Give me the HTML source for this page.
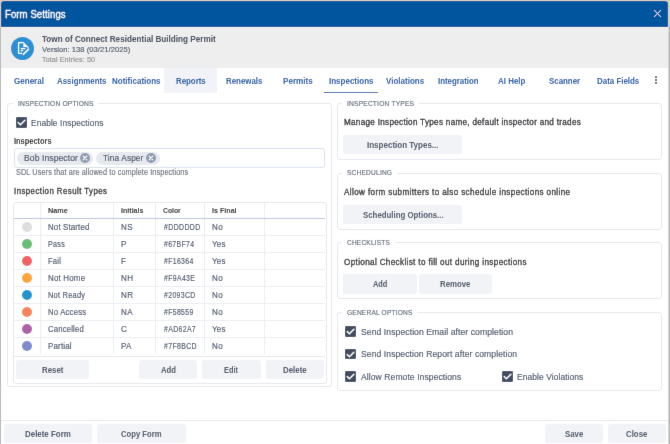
<!DOCTYPE html>
<html><head><meta charset="utf-8"><title>Form Settings</title>
<style>
html,body{margin:0;padding:0;width:670px;height:444px;overflow:hidden;background:#d6cdc3}
body{position:relative;font-family:"Liberation Sans", sans-serif}
</style></head><body><svg width="0" height="0" style="position:absolute"><filter id="sb" x="0" y="0" width="100%" height="100%" filterUnits="userSpaceOnUse" primitiveUnits="userSpaceOnUse"><feConvolveMatrix order="3" kernelMatrix="0 1 0 1 12 1 0 1 0" divisor="16" edgeMode="duplicate" preserveAlpha="false"/></filter></svg>
<div style="position:absolute;left:0;top:0;width:670px;height:444px;filter:url(#sb)">
<div style="position:absolute;left:0px;top:0px;width:670px;height:444px;background:#d6cdc3;"></div>
<div style="position:absolute;left:1px;top:1px;width:667px;height:443px;background:#fff;border-radius:3px 3px 0 0;overflow:hidden"><div style="position:absolute;left:0;top:0;width:667px;height:26px;background:#00559f"></div><div style="position:absolute;left:0;top:26px;width:667px;height:41px;background:#eeeeee"></div></div>
<div style="position:absolute;left:0px;top:27px;width:1px;height:417px;background:#b9b9b9;"></div>
<div style="position:absolute;left:668px;top:27px;width:2px;height:417px;background:linear-gradient(90deg,#e2e2e2,#a8a8a8);"></div>
<svg style="position:absolute;left:653px;top:9px" width="9" height="9" viewBox="0 0 9 9"><path d="M1.4 1.4L7.6 7.6M7.6 1.4L1.4 7.6" stroke="#dfe6f0" stroke-width="0.95" stroke-linecap="round"/></svg>
<div style="position:absolute;left:11.2px;top:36.8px;width:23.2px;height:23.2px;border-radius:50%;background:#2b8fd6"></div>
<svg style="position:absolute;left:11px;top:37px" width="23" height="23" viewBox="0 0 23 23"><path d="M12.6 5.6H8.3Q7.6 5.6 7.6 6.3V15.7Q7.6 16.4 8.3 16.4H11.2" fill="none" stroke="#fff" stroke-width="1.2" stroke-linejoin="round"/><path d="M12.4 5L17.4 10H12.4Z" fill="#fff"/><path d="M16.9 9.8V11.4" stroke="#fff" stroke-width="1.1"/><path d="M9.8 11.6H14.2M9.8 13.6H12" stroke="#fff" stroke-width="1.1"/><path d="M12.4 17.3L17.5 12.3" stroke="#fff" stroke-width="1.6" stroke-linecap="round"/></svg>
<div style="position:absolute;left:164px;top:68px;width:53px;height:25px;background:#f1f3f8;"></div>
<div style="position:absolute;left:324px;top:91.6px;width:54px;height:1.6px;background:#3068b0;"></div>
<div style="position:absolute;left:655px;top:76.4px;width:2.1px;height:2.1px;border-radius:50%;background:#3b4555"></div>
<div style="position:absolute;left:655px;top:79.4px;width:2.1px;height:2.1px;border-radius:50%;background:#3b4555"></div>
<div style="position:absolute;left:655px;top:82.0px;width:2.1px;height:2.1px;border-radius:50%;background:#3b4555"></div>
<div style="position:absolute;left:7px;top:103px;width:323px;height:282px;border:1px solid #e7e8ec;border-radius:3px"></div>
<div style="position:absolute;left:12.5px;top:102px;width:85.6px;height:4px;background:#fff;"></div>
<div style="position:absolute;left:16px;top:117px;width:10.6px;height:10.6px;background:#424e62;border-radius:1.3px"></div>
<svg style="position:absolute;left:16px;top:117px" width="11" height="11" viewBox="0 0 11 11"><path d="M2.2 5.6L4.4 7.8L8.9 3.2" fill="none" stroke="#fff" stroke-width="1.35" stroke-linecap="round" stroke-linejoin="round"/></svg>
<div style="position:absolute;left:14px;top:148px;width:309px;height:18px;border:1px solid #dbe2ec;border-radius:3px"></div>
<div style="position:absolute;left:16.5px;top:151.5px;width:76.5px;height:13px;background:#e6e9ee;border-radius:7px"></div>
<div style="position:absolute;left:79.7px;top:153px;width:10px;height:10px;background:#8e9bb0;border-radius:50%"></div>
<svg style="position:absolute;left:79.70px;top:153px" width="10" height="10" viewBox="0 0 10 10"><path d="M3.2 3.2L6.8 6.8M6.8 3.2L3.2 6.8" stroke="#fff" stroke-width="1.2" stroke-linecap="round"/></svg>
<div style="position:absolute;left:95.8px;top:151.5px;width:63.9px;height:13px;background:#e6e9ee;border-radius:7px"></div>
<div style="position:absolute;left:146.4px;top:153px;width:10px;height:10px;background:#8e9bb0;border-radius:50%"></div>
<svg style="position:absolute;left:146.40px;top:153px" width="10" height="10" viewBox="0 0 10 10"><path d="M3.2 3.2L6.8 6.8M6.8 3.2L3.2 6.8" stroke="#fff" stroke-width="1.2" stroke-linecap="round"/></svg>
<div style="position:absolute;left:13px;top:202px;width:312px;height:180px;border:1px solid #e7e8ec;border-radius:3px"></div>
<div style="position:absolute;left:40px;top:203px;width:1px;height:150.5px;background:#eceef1;"></div>
<div style="position:absolute;left:113px;top:203px;width:1px;height:150.5px;background:#eceef1;"></div>
<div style="position:absolute;left:155px;top:203px;width:1px;height:150.5px;background:#eceef1;"></div>
<div style="position:absolute;left:204px;top:203px;width:1px;height:150.5px;background:#eceef1;"></div>
<div style="position:absolute;left:264px;top:203px;width:1px;height:150.5px;background:#eceef1;"></div>
<div style="position:absolute;left:14px;top:217.8px;width:311px;height:1.3px;background:#bcc6d5;"></div>
<div style="position:absolute;left:14px;top:235px;width:311px;height:1px;background:#eceef1;"></div>
<div style="position:absolute;left:21.8px;top:221.8px;width:10.2px;height:10.2px;background:#DDDDDD;border-radius:50%"></div>
<div style="position:absolute;left:14px;top:252px;width:311px;height:1px;background:#eceef1;"></div>
<div style="position:absolute;left:21.8px;top:238.8px;width:10.2px;height:10.2px;background:#67BF74;border-radius:50%"></div>
<div style="position:absolute;left:14px;top:269px;width:311px;height:1px;background:#eceef1;"></div>
<div style="position:absolute;left:21.8px;top:255.8px;width:10.2px;height:10.2px;background:#F16364;border-radius:50%"></div>
<div style="position:absolute;left:14px;top:286px;width:311px;height:1px;background:#eceef1;"></div>
<div style="position:absolute;left:21.8px;top:272.8px;width:10.2px;height:10.2px;background:#F9A43E;border-radius:50%"></div>
<div style="position:absolute;left:14px;top:303px;width:311px;height:1px;background:#eceef1;"></div>
<div style="position:absolute;left:21.8px;top:289.8px;width:10.2px;height:10.2px;background:#2093CD;border-radius:50%"></div>
<div style="position:absolute;left:14px;top:320px;width:311px;height:1px;background:#eceef1;"></div>
<div style="position:absolute;left:21.8px;top:306.8px;width:10.2px;height:10.2px;background:#F58559;border-radius:50%"></div>
<div style="position:absolute;left:14px;top:337px;width:311px;height:1px;background:#eceef1;"></div>
<div style="position:absolute;left:21.8px;top:323.8px;width:10.2px;height:10.2px;background:#AD62A7;border-radius:50%"></div>
<div style="position:absolute;left:21.8px;top:340.8px;width:10.2px;height:10.2px;background:#7F8BCD;border-radius:50%"></div>
<div style="position:absolute;left:14px;top:356px;width:311px;height:1px;background:#e7e8ec;"></div>
<div style="position:absolute;left:15.8px;top:360.3px;width:73.2px;height:19.0px;background:#f2f3f7;border-radius:3px"></div>
<div style="position:absolute;left:139px;top:360.3px;width:58.2px;height:19.0px;background:#f2f3f7;border-radius:3px"></div>
<div style="position:absolute;left:202px;top:360.3px;width:58.6px;height:19.0px;background:#f2f3f7;border-radius:3px"></div>
<div style="position:absolute;left:265.5px;top:360.3px;width:58.1px;height:19.0px;background:#f2f3f7;border-radius:3px"></div>
<div style="position:absolute;left:337px;top:103px;width:323px;height:55px;border:1px solid #e7e8ec;border-radius:3px"></div>
<div style="position:absolute;left:341.7px;top:102px;width:77.30000000000001px;height:4px;background:#fff;"></div>
<div style="position:absolute;left:343.4px;top:135.3px;width:119.1px;height:19.0px;background:#f2f3f7;border-radius:3px"></div>
<div style="position:absolute;left:337px;top:173px;width:323px;height:55px;border:1px solid #e7e8ec;border-radius:3px"></div>
<div style="position:absolute;left:341.8px;top:172px;width:55.30000000000001px;height:4px;background:#fff;"></div>
<div style="position:absolute;left:343.4px;top:204.7px;width:119.1px;height:19.3px;background:#f2f3f7;border-radius:3px"></div>
<div style="position:absolute;left:337px;top:242px;width:323px;height:55px;border:1px solid #e7e8ec;border-radius:3px"></div>
<div style="position:absolute;left:341.8px;top:241px;width:53.099999999999966px;height:4px;background:#fff;"></div>
<div style="position:absolute;left:343.4px;top:274px;width:73.3px;height:19.6px;background:#f2f3f7;border-radius:3px"></div>
<div style="position:absolute;left:418.9px;top:274px;width:73.3px;height:19.6px;background:#f2f3f7;border-radius:3px"></div>
<div style="position:absolute;left:337px;top:312px;width:323px;height:77px;border:1px solid #e7e8ec;border-radius:3px"></div>
<div style="position:absolute;left:341.5px;top:311px;width:75.89999999999998px;height:4px;background:#fff;"></div>
<div style="position:absolute;left:345.4px;top:326.3px;width:10.6px;height:10.6px;background:#424e62;border-radius:1.3px"></div>
<svg style="position:absolute;left:345.4px;top:326.3px" width="11" height="11" viewBox="0 0 11 11"><path d="M2.2 5.6L4.4 7.8L8.9 3.2" fill="none" stroke="#fff" stroke-width="1.35" stroke-linecap="round" stroke-linejoin="round"/></svg>
<div style="position:absolute;left:345.4px;top:348.6px;width:10.6px;height:10.6px;background:#424e62;border-radius:1.3px"></div>
<svg style="position:absolute;left:345.4px;top:348.6px" width="11" height="11" viewBox="0 0 11 11"><path d="M2.2 5.6L4.4 7.8L8.9 3.2" fill="none" stroke="#fff" stroke-width="1.35" stroke-linecap="round" stroke-linejoin="round"/></svg>
<div style="position:absolute;left:345.4px;top:371.1px;width:10.6px;height:10.6px;background:#424e62;border-radius:1.3px"></div>
<svg style="position:absolute;left:345.4px;top:371.1px" width="11" height="11" viewBox="0 0 11 11"><path d="M2.2 5.6L4.4 7.8L8.9 3.2" fill="none" stroke="#fff" stroke-width="1.35" stroke-linecap="round" stroke-linejoin="round"/></svg>
<div style="position:absolute;left:502px;top:371.1px;width:10.6px;height:10.6px;background:#424e62;border-radius:1.3px"></div>
<svg style="position:absolute;left:502px;top:371.1px" width="11" height="11" viewBox="0 0 11 11"><path d="M2.2 5.6L4.4 7.8L8.9 3.2" fill="none" stroke="#fff" stroke-width="1.35" stroke-linecap="round" stroke-linejoin="round"/></svg>
<div style="position:absolute;left:1px;top:420px;width:667px;height:1px;background:#e8eaed;"></div>
<div style="position:absolute;left:3.6px;top:424px;width:88.4px;height:19px;background:#f2f3f7;border-radius:3px"></div>
<div style="position:absolute;left:97.3px;top:424px;width:88.4px;height:19px;background:#f2f3f7;border-radius:3px"></div>
<div style="position:absolute;left:545.2px;top:424px;width:57.6px;height:18.6px;background:#f2f3f7;border-radius:3px"></div>
<div style="position:absolute;left:608.4px;top:424px;width:57.8px;height:18.6px;background:#f2f3f7;border-radius:3px"></div>
<div style="position:absolute;left:5.00px;top:9.80px;font-size:10.4px;line-height:10.4px;font-weight:normal;-webkit-text-stroke:0.3px #ffffff;color:#ffffff;white-space:nowrap;letter-spacing:0.098px;transform:scaleX(0.9200);transform-origin:0.00px 0;">Form Settings</div>
<div style="position:absolute;left:41.50px;top:34.16px;font-size:9.5px;line-height:9.5px;font-weight:bold;color:#3b4455;white-space:nowrap;transform:scaleX(0.8577);transform-origin:0.00px 0;">Town of Connect Residential Building Permit</div>
<div style="position:absolute;left:41.50px;top:45.53px;font-size:8px;line-height:8px;font-weight:normal;-webkit-text-stroke:0.15px #485366;color:#485366;white-space:nowrap;letter-spacing:0.043px;transform:scaleX(0.9472);transform-origin:0.00px 0;">Version: 138 (03/21/2025)</div>
<div style="position:absolute;left:41.50px;top:55.73px;font-size:8px;line-height:8px;font-weight:normal;-webkit-text-stroke:0.15px #8b8d90;color:#8b8d90;white-space:nowrap;letter-spacing:0.076px;transform:scaleX(0.9047);transform-origin:0.00px 0;">Total Entries: 50</div>
<div style="position:absolute;left:13.70px;top:76.07px;font-size:9.6px;line-height:9.6px;font-weight:bold;color:#1d58a6;white-space:nowrap;transform:scaleX(0.8385);transform-origin:0.00px 0;">General</div>
<div style="position:absolute;left:57.40px;top:76.07px;font-size:9.6px;line-height:9.6px;font-weight:bold;color:#1d58a6;white-space:nowrap;transform:scaleX(0.8213);transform-origin:0.00px 0;">Assignments</div>
<div style="position:absolute;left:112.40px;top:76.07px;font-size:9.6px;line-height:9.6px;font-weight:bold;color:#1d58a6;white-space:nowrap;transform:scaleX(0.8362);transform-origin:0.00px 0;">Notifications</div>
<div style="position:absolute;left:175.60px;top:76.07px;font-size:9.6px;line-height:9.6px;font-weight:bold;color:#1d58a6;white-space:nowrap;transform:scaleX(0.8187);transform-origin:0.00px 0;">Reports</div>
<div style="position:absolute;left:225.90px;top:76.07px;font-size:9.6px;line-height:9.6px;font-weight:bold;color:#1d58a6;white-space:nowrap;transform:scaleX(0.8219);transform-origin:0.00px 0;">Renewals</div>
<div style="position:absolute;left:282.60px;top:76.07px;font-size:9.6px;line-height:9.6px;font-weight:bold;color:#1d58a6;white-space:nowrap;transform:scaleX(0.8434);transform-origin:0.00px 0;">Permits</div>
<div style="position:absolute;left:328.80px;top:76.07px;font-size:9.6px;line-height:9.6px;font-weight:bold;color:#1d58a6;white-space:nowrap;transform:scaleX(0.8344);transform-origin:0.00px 0;">Inspections</div>
<div style="position:absolute;left:385.90px;top:76.07px;font-size:9.6px;line-height:9.6px;font-weight:bold;color:#1d58a6;white-space:nowrap;transform:scaleX(0.8360);transform-origin:0.00px 0;">Violations</div>
<div style="position:absolute;left:438.30px;top:76.07px;font-size:9.6px;line-height:9.6px;font-weight:bold;color:#1d58a6;white-space:nowrap;transform:scaleX(0.8188);transform-origin:0.00px 0;">Integration</div>
<div style="position:absolute;left:498.00px;top:76.07px;font-size:9.6px;line-height:9.6px;font-weight:bold;color:#1d58a6;white-space:nowrap;transform:scaleX(0.8286);transform-origin:0.00px 0;">AI Help</div>
<div style="position:absolute;left:549.00px;top:76.07px;font-size:9.6px;line-height:9.6px;font-weight:bold;color:#1d58a6;white-space:nowrap;transform:scaleX(0.8210);transform-origin:0.00px 0;">Scanner</div>
<div style="position:absolute;left:597.00px;top:76.07px;font-size:9.6px;line-height:9.6px;font-weight:bold;color:#1d58a6;white-space:nowrap;transform:scaleX(0.8260);transform-origin:0.00px 0;">Data Fields</div>
<div style="position:absolute;left:17.90px;top:99.63px;font-size:8px;line-height:8px;font-weight:normal;-webkit-text-stroke:0.15px #5b6577;color:#5b6577;white-space:nowrap;letter-spacing:0.204px;transform:scaleX(0.8331);transform-origin:0.00px 0;">INSPECTION OPTIONS</div>
<div style="position:absolute;left:31.30px;top:118.44px;font-size:9.4px;line-height:9.4px;font-weight:normal;-webkit-text-stroke:0.15px #445066;color:#445066;white-space:nowrap;letter-spacing:0.114px;transform:scaleX(0.8910);transform-origin:0.00px 0;">Enable Inspections</div>
<div style="position:absolute;left:14.00px;top:137.17px;font-size:8.3px;line-height:8.3px;font-weight:bold;color:#26282c;white-space:nowrap;transform:scaleX(0.8950);transform-origin:0.00px 0;">Inspectors</div>
<div style="position:absolute;left:23.80px;top:153.04px;font-size:9.4px;line-height:9.4px;font-weight:normal;-webkit-text-stroke:0.15px #445066;color:#445066;white-space:nowrap;letter-spacing:0.089px;transform:scaleX(0.9150);transform-origin:0.00px 0;">Bob Inspector</div>
<div style="position:absolute;left:103.30px;top:153.04px;font-size:9.4px;line-height:9.4px;font-weight:normal;-webkit-text-stroke:0.15px #445066;color:#445066;white-space:nowrap;letter-spacing:0.131px;transform:scaleX(0.8840);transform-origin:0.00px 0;">Tina Asper</div>
<div style="position:absolute;left:15.80px;top:167.60px;font-size:8.5px;line-height:8.5px;font-weight:normal;-webkit-text-stroke:0.15px #666d79;color:#666d79;white-space:nowrap;letter-spacing:0.135px;transform:scaleX(0.8545);transform-origin:0.00px 0;">SDL Users that are allowed to complete Inspections</div>
<div style="position:absolute;left:14.00px;top:186.80px;font-size:8.5px;line-height:8.5px;font-weight:normal;-webkit-text-stroke:0.3px #26282c;color:#26282c;white-space:nowrap;letter-spacing:0.499px;transform:scaleX(0.9200);transform-origin:0.00px 0;">Inspection Result Types</div>
<div style="position:absolute;left:48.00px;top:207.25px;font-size:7.5px;line-height:7.5px;font-weight:bold;color:#26282c;white-space:nowrap;transform:scaleX(0.9627);transform-origin:0.00px 0;">Name</div>
<div style="position:absolute;left:120.70px;top:207.25px;font-size:7.5px;line-height:7.5px;font-weight:bold;color:#26282c;white-space:nowrap;transform:scaleX(0.9455);transform-origin:0.00px 0;">Initials</div>
<div style="position:absolute;left:163.40px;top:207.25px;font-size:7.5px;line-height:7.5px;font-weight:bold;color:#26282c;white-space:nowrap;transform:scaleX(0.9053);transform-origin:0.00px 0;">Color</div>
<div style="position:absolute;left:211.80px;top:207.25px;font-size:7.5px;line-height:7.5px;font-weight:bold;color:#26282c;white-space:nowrap;transform:scaleX(0.9512);transform-origin:0.00px 0;">Is Final</div>
<div style="position:absolute;left:48.00px;top:222.34px;font-size:9.4px;line-height:9.4px;font-weight:normal;-webkit-text-stroke:0.15px #445066;color:#445066;white-space:nowrap;letter-spacing:0.179px;transform:scaleX(0.8410);transform-origin:0.00px 0;">Not Started</div>
<div style="position:absolute;left:120.70px;top:222.34px;font-size:9.4px;line-height:9.4px;font-weight:normal;-webkit-text-stroke:0.15px #445066;color:#445066;white-space:nowrap;letter-spacing:0.429px;transform:scaleX(0.8562);transform-origin:0.00px 0;">NS</div>
<div style="position:absolute;left:163.60px;top:222.34px;font-size:9.4px;line-height:9.4px;font-weight:normal;-webkit-text-stroke:0.15px #445066;color:#445066;white-space:nowrap;letter-spacing:0.547px;transform:scaleX(0.7375);transform-origin:0.00px 0;">#DDDDDD</div>
<div style="position:absolute;left:211.80px;top:222.34px;font-size:9.4px;line-height:9.4px;font-weight:normal;-webkit-text-stroke:0.15px #445066;color:#445066;white-space:nowrap;letter-spacing:0.395px;transform:scaleX(0.8562);transform-origin:0.00px 0;">No</div>
<div style="position:absolute;left:48.00px;top:239.34px;font-size:9.4px;line-height:9.4px;font-weight:normal;-webkit-text-stroke:0.15px #445066;color:#445066;white-space:nowrap;letter-spacing:0.459px;transform:scaleX(0.7545);transform-origin:0.00px 0;">Pass</div>
<div style="position:absolute;left:120.70px;top:239.34px;font-size:9.4px;line-height:9.4px;font-weight:normal;-webkit-text-stroke:0.15px #445066;color:#445066;white-space:nowrap;transform:scaleX(0.8850);transform-origin:0.00px 0;">P</div>
<div style="position:absolute;left:163.60px;top:239.34px;font-size:9.4px;line-height:9.4px;font-weight:normal;-webkit-text-stroke:0.15px #445066;color:#445066;white-space:nowrap;letter-spacing:0.449px;transform:scaleX(0.7375);transform-origin:0.00px 0;">#67BF74</div>
<div style="position:absolute;left:211.80px;top:239.34px;font-size:9.4px;line-height:9.4px;font-weight:normal;-webkit-text-stroke:0.15px #445066;color:#445066;white-space:nowrap;letter-spacing:0.262px;transform:scaleX(0.8562);transform-origin:0.00px 0;">Yes</div>
<div style="position:absolute;left:48.00px;top:256.34px;font-size:9.4px;line-height:9.4px;font-weight:normal;-webkit-text-stroke:0.15px #445066;color:#445066;white-space:nowrap;letter-spacing:0.227px;transform:scaleX(0.8150);transform-origin:0.00px 0;">Fail</div>
<div style="position:absolute;left:120.70px;top:256.34px;font-size:9.4px;line-height:9.4px;font-weight:normal;-webkit-text-stroke:0.15px #445066;color:#445066;white-space:nowrap;transform:scaleX(0.8850);transform-origin:0.00px 0;">F</div>
<div style="position:absolute;left:163.60px;top:256.34px;font-size:9.4px;line-height:9.4px;font-weight:normal;-webkit-text-stroke:0.15px #445066;color:#445066;white-space:nowrap;letter-spacing:0.437px;transform:scaleX(0.7375);transform-origin:0.00px 0;">#F16364</div>
<div style="position:absolute;left:211.80px;top:256.34px;font-size:9.4px;line-height:9.4px;font-weight:normal;-webkit-text-stroke:0.15px #445066;color:#445066;white-space:nowrap;letter-spacing:0.262px;transform:scaleX(0.8562);transform-origin:0.00px 0;">Yes</div>
<div style="position:absolute;left:48.00px;top:273.34px;font-size:9.4px;line-height:9.4px;font-weight:normal;-webkit-text-stroke:0.15px #445066;color:#445066;white-space:nowrap;letter-spacing:0.214px;transform:scaleX(0.8485);transform-origin:0.00px 0;">Not Home</div>
<div style="position:absolute;left:120.70px;top:273.34px;font-size:9.4px;line-height:9.4px;font-weight:normal;-webkit-text-stroke:0.15px #445066;color:#445066;white-space:nowrap;letter-spacing:0.429px;transform:scaleX(0.8562);transform-origin:0.00px 0;">NH</div>
<div style="position:absolute;left:163.60px;top:273.34px;font-size:9.4px;line-height:9.4px;font-weight:normal;-webkit-text-stroke:0.15px #445066;color:#445066;white-space:nowrap;letter-spacing:0.461px;transform:scaleX(0.7375);transform-origin:0.00px 0;">#F9A43E</div>
<div style="position:absolute;left:211.80px;top:273.34px;font-size:9.4px;line-height:9.4px;font-weight:normal;-webkit-text-stroke:0.15px #445066;color:#445066;white-space:nowrap;letter-spacing:0.395px;transform:scaleX(0.8562);transform-origin:0.00px 0;">No</div>
<div style="position:absolute;left:48.00px;top:290.34px;font-size:9.4px;line-height:9.4px;font-weight:normal;-webkit-text-stroke:0.15px #445066;color:#445066;white-space:nowrap;letter-spacing:0.287px;transform:scaleX(0.7953);transform-origin:0.00px 0;">Not Ready</div>
<div style="position:absolute;left:120.70px;top:290.34px;font-size:9.4px;line-height:9.4px;font-weight:normal;-webkit-text-stroke:0.15px #445066;color:#445066;white-space:nowrap;letter-spacing:0.462px;transform:scaleX(0.8562);transform-origin:0.00px 0;">NR</div>
<div style="position:absolute;left:163.60px;top:290.34px;font-size:9.4px;line-height:9.4px;font-weight:normal;-webkit-text-stroke:0.15px #445066;color:#445066;white-space:nowrap;letter-spacing:0.473px;transform:scaleX(0.7375);transform-origin:0.00px 0;">#2093CD</div>
<div style="position:absolute;left:211.80px;top:290.34px;font-size:9.4px;line-height:9.4px;font-weight:normal;-webkit-text-stroke:0.15px #445066;color:#445066;white-space:nowrap;letter-spacing:0.395px;transform:scaleX(0.8562);transform-origin:0.00px 0;">No</div>
<div style="position:absolute;left:48.00px;top:307.34px;font-size:9.4px;line-height:9.4px;font-weight:normal;-webkit-text-stroke:0.15px #445066;color:#445066;white-space:nowrap;letter-spacing:0.239px;transform:scaleX(0.8249);transform-origin:0.00px 0;">No Access</div>
<div style="position:absolute;left:120.70px;top:307.34px;font-size:9.4px;line-height:9.4px;font-weight:normal;-webkit-text-stroke:0.15px #445066;color:#445066;white-space:nowrap;letter-spacing:0.462px;transform:scaleX(0.8562);transform-origin:0.00px 0;">NA</div>
<div style="position:absolute;left:163.60px;top:307.34px;font-size:9.4px;line-height:9.4px;font-weight:normal;-webkit-text-stroke:0.15px #445066;color:#445066;white-space:nowrap;letter-spacing:0.437px;transform:scaleX(0.7375);transform-origin:0.00px 0;">#F58559</div>
<div style="position:absolute;left:211.80px;top:307.34px;font-size:9.4px;line-height:9.4px;font-weight:normal;-webkit-text-stroke:0.15px #445066;color:#445066;white-space:nowrap;letter-spacing:0.395px;transform:scaleX(0.8562);transform-origin:0.00px 0;">No</div>
<div style="position:absolute;left:48.00px;top:324.34px;font-size:9.4px;line-height:9.4px;font-weight:normal;-webkit-text-stroke:0.15px #445066;color:#445066;white-space:nowrap;letter-spacing:0.223px;transform:scaleX(0.8228);transform-origin:0.00px 0;">Cancelled</div>
<div style="position:absolute;left:120.70px;top:324.34px;font-size:9.4px;line-height:9.4px;font-weight:normal;-webkit-text-stroke:0.15px #445066;color:#445066;white-space:nowrap;transform:scaleX(0.8850);transform-origin:0.00px 0;">C</div>
<div style="position:absolute;left:163.60px;top:324.34px;font-size:9.4px;line-height:9.4px;font-weight:normal;-webkit-text-stroke:0.15px #445066;color:#445066;white-space:nowrap;letter-spacing:0.474px;transform:scaleX(0.7375);transform-origin:0.00px 0;">#AD62A7</div>
<div style="position:absolute;left:211.80px;top:324.34px;font-size:9.4px;line-height:9.4px;font-weight:normal;-webkit-text-stroke:0.15px #445066;color:#445066;white-space:nowrap;letter-spacing:0.262px;transform:scaleX(0.8562);transform-origin:0.00px 0;">Yes</div>
<div style="position:absolute;left:48.00px;top:341.34px;font-size:9.4px;line-height:9.4px;font-weight:normal;-webkit-text-stroke:0.15px #445066;color:#445066;white-space:nowrap;letter-spacing:0.145px;transform:scaleX(0.8589);transform-origin:0.00px 0;">Partial</div>
<div style="position:absolute;left:120.70px;top:341.34px;font-size:9.4px;line-height:9.4px;font-weight:normal;-webkit-text-stroke:0.15px #445066;color:#445066;white-space:nowrap;letter-spacing:0.422px;transform:scaleX(0.8562);transform-origin:0.00px 0;">PA</div>
<div style="position:absolute;left:163.60px;top:341.34px;font-size:9.4px;line-height:9.4px;font-weight:normal;-webkit-text-stroke:0.15px #445066;color:#445066;white-space:nowrap;letter-spacing:0.491px;transform:scaleX(0.7375);transform-origin:0.00px 0;">#7F8BCD</div>
<div style="position:absolute;left:211.80px;top:341.34px;font-size:9.4px;line-height:9.4px;font-weight:normal;-webkit-text-stroke:0.15px #445066;color:#445066;white-space:nowrap;letter-spacing:0.395px;transform:scaleX(0.8562);transform-origin:0.00px 0;">No</div>
<div style="position:absolute;left:41.70px;top:366.20px;font-size:8.5px;line-height:8.5px;font-weight:bold;color:#465163;white-space:nowrap;transform:scaleX(0.9219);transform-origin:0.00px 0;">Reset</div>
<div style="position:absolute;left:161.00px;top:366.20px;font-size:8.5px;line-height:8.5px;font-weight:bold;color:#465163;white-space:nowrap;transform:scaleX(0.9063);transform-origin:0.00px 0;">Add</div>
<div style="position:absolute;left:224.10px;top:366.20px;font-size:8.5px;line-height:8.5px;font-weight:bold;color:#465163;white-space:nowrap;transform:scaleX(0.8691);transform-origin:0.00px 0;">Edit</div>
<div style="position:absolute;left:282.60px;top:366.20px;font-size:8.5px;line-height:8.5px;font-weight:bold;color:#465163;white-space:nowrap;transform:scaleX(0.9269);transform-origin:0.00px 0;">Delete</div>
<div style="position:absolute;left:347.20px;top:99.63px;font-size:8px;line-height:8px;font-weight:normal;-webkit-text-stroke:0.15px #5b6577;color:#5b6577;white-space:nowrap;letter-spacing:0.204px;transform:scaleX(0.8343);transform-origin:0.00px 0;">INSPECTION TYPES</div>
<div style="position:absolute;left:343.90px;top:118.15px;font-size:8.8px;line-height:8.8px;font-weight:normal;-webkit-text-stroke:0.3px #26282c;color:#26282c;white-space:nowrap;letter-spacing:0.340px;transform:scaleX(0.9200);transform-origin:0.00px 0;">Manage Inspection Types name, default inspector and trades</div>
<div style="position:absolute;left:367.40px;top:141.20px;font-size:8.5px;line-height:8.5px;font-weight:bold;color:#465163;white-space:nowrap;transform:scaleX(0.9427);transform-origin:0.00px 0;">Inspection Types...</div>
<div style="position:absolute;left:347.30px;top:169.43px;font-size:8px;line-height:8px;font-weight:normal;-webkit-text-stroke:0.15px #5b6577;color:#5b6577;white-space:nowrap;letter-spacing:0.251px;transform:scaleX(0.8222);transform-origin:0.00px 0;">SCHEDULING</div>
<div style="position:absolute;left:343.90px;top:187.65px;font-size:8.8px;line-height:8.8px;font-weight:normal;-webkit-text-stroke:0.3px #26282c;color:#26282c;white-space:nowrap;letter-spacing:0.416px;transform:scaleX(0.9200);transform-origin:0.00px 0;">Allow form submitters to also schedule inspections online</div>
<div style="position:absolute;left:362.50px;top:210.60px;font-size:8.5px;line-height:8.5px;font-weight:bold;color:#465163;white-space:nowrap;transform:scaleX(0.9230);transform-origin:0.00px 0;">Scheduling Options...</div>
<div style="position:absolute;left:347.30px;top:238.83px;font-size:8px;line-height:8px;font-weight:normal;-webkit-text-stroke:0.15px #5b6577;color:#5b6577;white-space:nowrap;letter-spacing:0.248px;transform:scaleX(0.8172);transform-origin:0.00px 0;">CHECKLISTS</div>
<div style="position:absolute;left:343.90px;top:257.55px;font-size:8.8px;line-height:8.8px;font-weight:normal;-webkit-text-stroke:0.3px #26282c;color:#26282c;white-space:nowrap;letter-spacing:0.393px;transform:scaleX(0.9200);transform-origin:0.00px 0;">Optional Checklist to fill out during inspections</div>
<div style="position:absolute;left:373.20px;top:280.20px;font-size:8.5px;line-height:8.5px;font-weight:bold;color:#465163;white-space:nowrap;transform:scaleX(0.8695);transform-origin:0.00px 0;">Add</div>
<div style="position:absolute;left:440.30px;top:280.20px;font-size:8.5px;line-height:8.5px;font-weight:bold;color:#465163;white-space:nowrap;transform:scaleX(0.9177);transform-origin:0.00px 0;">Remove</div>
<div style="position:absolute;left:347.00px;top:308.63px;font-size:8px;line-height:8px;font-weight:normal;-webkit-text-stroke:0.15px #5b6577;color:#5b6577;white-space:nowrap;letter-spacing:0.232px;transform:scaleX(0.8239);transform-origin:0.00px 0;">GENERAL OPTIONS</div>
<div style="position:absolute;left:361.00px;top:327.24px;font-size:9.4px;line-height:9.4px;font-weight:normal;-webkit-text-stroke:0.15px #445066;color:#445066;white-space:nowrap;letter-spacing:0.078px;transform:scaleX(0.9186);transform-origin:0.00px 0;">Send Inspection Email after completion</div>
<div style="position:absolute;left:361.00px;top:349.34px;font-size:9.4px;line-height:9.4px;font-weight:normal;-webkit-text-stroke:0.15px #445066;color:#445066;white-space:nowrap;letter-spacing:0.080px;transform:scaleX(0.9164);transform-origin:0.00px 0;">Send Inspection Report after completion</div>
<div style="position:absolute;left:361.00px;top:371.84px;font-size:9.4px;line-height:9.4px;font-weight:normal;-webkit-text-stroke:0.15px #445066;color:#445066;white-space:nowrap;letter-spacing:0.092px;transform:scaleX(0.9113);transform-origin:0.00px 0;">Allow Remote Inspections</div>
<div style="position:absolute;left:517.40px;top:371.84px;font-size:9.4px;line-height:9.4px;font-weight:normal;-webkit-text-stroke:0.15px #445066;color:#445066;white-space:nowrap;letter-spacing:0.104px;transform:scaleX(0.8969);transform-origin:0.00px 0;">Enable Violations</div>
<div style="position:absolute;left:24.80px;top:429.60px;font-size:8.5px;line-height:8.5px;font-weight:bold;color:#465163;white-space:nowrap;transform:scaleX(0.9321);transform-origin:0.00px 0;">Delete Form</div>
<div style="position:absolute;left:120.90px;top:429.60px;font-size:8.5px;line-height:8.5px;font-weight:bold;color:#465163;white-space:nowrap;transform:scaleX(0.9028);transform-origin:0.00px 0;">Copy Form</div>
<div style="position:absolute;left:564.70px;top:429.60px;font-size:8.5px;line-height:8.5px;font-weight:bold;color:#465163;white-space:nowrap;transform:scaleX(0.9193);transform-origin:0.00px 0;">Save</div>
<div style="position:absolute;left:626.40px;top:429.60px;font-size:8.5px;line-height:8.5px;font-weight:bold;color:#465163;white-space:nowrap;transform:scaleX(0.9223);transform-origin:0.00px 0;">Close</div>
</div></body></html>
